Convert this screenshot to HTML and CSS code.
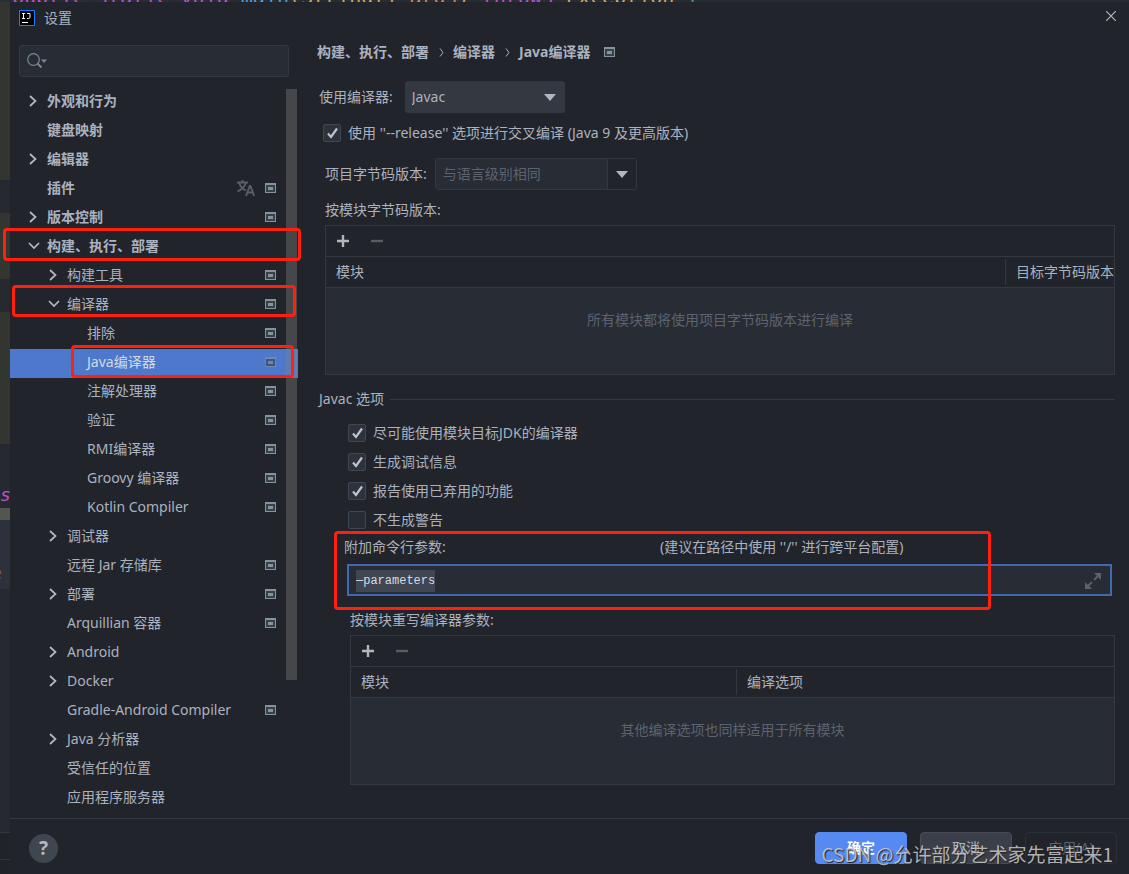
FILE: index.html
```html
<!DOCTYPE html>
<html lang="zh-CN">
<head>
<meta charset="utf-8">
<title>设置</title>
<link rel="stylesheet" href="styles.css">
</head>
<body>
<svg class="defs" aria-hidden="true">
  <symbol id="right" viewBox="0 0 16 16"><path d="M5 3l5.500 5L5 13" fill="none" stroke="currentColor" stroke-width="1.700"/></symbol>
  <symbol id="down" viewBox="0 0 16 16"><path d="M4 5l5 5 5-5" fill="none" stroke="currentColor" stroke-width="1.700"/></symbol>
  <symbol id="proj" viewBox="0 0 11 10"><path d="M0 0h11v10H0z" fill="#87939a"/><path d="M1 2h9v7H1z" fill="#35414b"/><path d="M3 4h5v3H3z" fill="#87939a"/></symbol>
  <symbol id="plus" viewBox="0 0 14 14"><path d="M7 1v12M1 7h12" stroke="#b4b6b9" stroke-width="2.400"/></symbol>
  <symbol id="minus" viewBox="0 0 14 14"><path d="M1 7h12" stroke="#5b5d60" stroke-width="2.400"/></symbol>
  <symbol id="caret" viewBox="0 0 12 7"><path d="M0 0h12L6 7z" fill="#b0b7c3"/></symbol>
</svg>
<div class="editor-line"><code><span class="kw">public static void</span> <span class="fn">main</span><span class="ty">(String[]</span> <span class="arg">args</span><span class="ty">)</span> <span class="kw">throws</span> <span class="ty">Exception</span> <span class="br">{</span></code></div>
<div class="workspace">
  <div class="gutter" aria-hidden="true">
    <div class="band changed b180"></div><div class="band plain b33"></div>
    <div class="band changed b66"></div><div class="band plain b33"></div>
    <div class="band changed b132"></div><div class="band plain b64"><i>s</i></div>
    <div class="band olive b12"></div><div class="band caretline b69"><b>e</b></div>
    <div class="band plain rest"></div><div class="band status"></div><div class="band status last"></div>
  </div>
  <div class="dialog" role="dialog" aria-labelledby="title">
    <header class="titlebar">
      <svg class="logo" viewBox="0 0 16 16"><path d="M.5.500h15v15H.5z" fill="#000" stroke="#147cff"/><path d="M3 3.500h3M4.500 3.500v5M3 8.500h3M8 3.500h3v3.500q0 1.500-1.500 1.500H8M3 12.500h6" fill="none" stroke="#fff"/></svg>
      <h1 id="title">设置</h1>
      <button class="close" aria-label="关闭"><svg viewBox="0 0 10 10"><path d="M0 0l10 10M10 0L0 10" stroke="#b5b6b8" stroke-width="1.200"/></svg></button>
    </header>
    <div class="main">
      <aside class="sidebar">
        <label class="search">
          <svg viewBox="0 0 21 16"><circle cx="6.500" cy="6.500" r="5.800" fill="none" stroke="#7c8894" stroke-width="1.200"/><path d="M10.500 10.500l4 4" stroke="#7c8894" stroke-width="1.800"/><path d="M14 6.500h6l-3 3.500z" fill="#7c8894"/></svg>
          <input type="search" aria-label="搜索设置">
        </label>
        <ul class="tree">
          <li class="l1"><button aria-label="展开"><svg><use href="#right"/></svg></button><span>外观和行为</span></li>
          <li class="l1"><span>键盘映射</span></li>
          <li class="l1"><button aria-label="展开"><svg><use href="#right"/></svg></button><span>编辑器</span></li>
          <li class="l1"><span>插件</span><svg class="lang" viewBox="0 0 18 17"><path d="M0 2.500h11M5.500 0v2.500M2 2.500q2 6 7 8M9 2.500q-2 6-8.500 9M9 16l3.800-10h.6L17.200 16M10.500 12.500h5" fill="none" stroke="#5b6067" stroke-width="1.800"/></svg><svg class="proj"><use href="#proj"/></svg></li>
          <li class="l1"><button aria-label="展开"><svg><use href="#right"/></svg></button><span>版本控制</span><svg class="proj"><use href="#proj"/></svg></li>
          <li class="l1"><button aria-label="折叠"><svg><use href="#down"/></svg></button><span>构建、执行、部署</span><div class="mark mark-build"></div></li>
          <li class="l2"><button aria-label="展开"><svg><use href="#right"/></svg></button><span>构建工具</span><svg class="proj"><use href="#proj"/></svg></li>
          <li class="l2"><button aria-label="折叠"><svg><use href="#down"/></svg></button><span>编译器</span><svg class="proj"><use href="#proj"/></svg><div class="mark mark-compiler"></div></li>
          <li class="l3"><span>排除</span><svg class="proj"><use href="#proj"/></svg></li>
          <li class="l3 selected"><span>Java编译器</span><svg class="proj"><use href="#proj"/></svg><div class="mark mark-java"></div></li>
          <li class="l3"><span>注解处理器</span><svg class="proj"><use href="#proj"/></svg></li>
          <li class="l3"><span>验证</span><svg class="proj"><use href="#proj"/></svg></li>
          <li class="l3"><span>RMI编译器</span><svg class="proj"><use href="#proj"/></svg></li>
          <li class="l3"><span>Groovy 编译器</span><svg class="proj"><use href="#proj"/></svg></li>
          <li class="l3"><span>Kotlin Compiler</span><svg class="proj"><use href="#proj"/></svg></li>
          <li class="l2"><button aria-label="展开"><svg><use href="#right"/></svg></button><span>调试器</span></li>
          <li class="l2"><span>远程 Jar 存储库</span><svg class="proj"><use href="#proj"/></svg></li>
          <li class="l2"><button aria-label="展开"><svg><use href="#right"/></svg></button><span>部署</span><svg class="proj"><use href="#proj"/></svg></li>
          <li class="l2"><span>Arquillian 容器</span><svg class="proj"><use href="#proj"/></svg></li>
          <li class="l2"><button aria-label="展开"><svg><use href="#right"/></svg></button><span>Android</span></li>
          <li class="l2"><button aria-label="展开"><svg><use href="#right"/></svg></button><span>Docker</span></li>
          <li class="l2"><span>Gradle-Android Compiler</span><svg class="proj"><use href="#proj"/></svg></li>
          <li class="l2"><button aria-label="展开"><svg><use href="#right"/></svg></button><span>Java 分析器</span></li>
          <li class="l2"><span>受信任的位置</span></li>
          <li class="l2"><span>应用程序服务器</span></li>
        </ul>
      </aside>
      <main class="content">
        <nav class="crumbs"><span>构建、执行、部署</span><svg viewBox="0 0 5 9"><path d="M1 .5l3 4-3 4" fill="none" stroke="#a9b0bc"/></svg><span>编译器</span><svg viewBox="0 0 5 9"><path d="M1 .5l3 4-3 4" fill="none" stroke="#a9b0bc"/></svg><span>Java编译器</span><svg class="proj"><use href="#proj"/></svg></nav>
        <div class="field compiler">
          <label for="compiler">使用编译器:</label>
          <div class="select"><select id="compiler"><option>Javac</option></select><svg class="caret"><use href="#caret"/></svg></div>
        </div>
        <label class="check release"><input type="checkbox" checked>使用 ''--release'' 选项进行交叉编译 (Java 9 及更高版本)</label>
        <div class="inset">
          <div class="field bytecode">
            <label for="bytecode">项目字节码版本:</label>
            <div class="combo"><input id="bytecode" type="text" placeholder="与语言级别相同"><button aria-label="选择版本"><svg class="caret"><use href="#caret"/></svg></button></div>
          </div>
          <p class="caption module-caption">按模块字节码版本:</p>
          <section class="panel">
            <div class="tools"><button aria-label="添加"><svg><use href="#plus"/></svg></button><button aria-label="移除" disabled><svg><use href="#minus"/></svg></button></div>
            <table><colgroup><col><col class="target-col"></colgroup>
              <thead><tr><th><span>模块</span></th><th><span>目标字节码版本</span></th></tr></thead>
              <tbody><tr><td colspan="2">所有模块都将使用项目字节码版本进行编译</td></tr></tbody></table>
          </section>
        </div>
        <h2 class="section-title">Javac 选项</h2>
        <div class="options">
          <div class="checks">
            <label class="check"><input type="checkbox" checked>尽可能使用模块目标JDK的编译器</label>
            <label class="check"><input type="checkbox" checked>生成调试信息</label>
            <label class="check"><input type="checkbox" checked>报告使用已弃用的功能</label>
            <label class="check"><input type="checkbox">不生成警告</label>
          </div>
          <div class="args">
            <div class="args-head"><label for="args">附加命令行参数:</label><span>(建议在路径中使用 ''/'' 进行跨平台配置)</span></div>
            <div class="args-box"><input id="args" type="text" value="—parameters" spellcheck="false"><button aria-label="展开"><svg viewBox="0 0 16 16"><path d="M9 7l4-4M7 9l-4 4" stroke="#5b6269" stroke-width="2"/><path d="M9 0h7v7zM0 9v7h7z" fill="#5b6269"/></svg></button></div>
            <div class="mark mark-args"></div>
          </div>
          <div class="override">
            <p class="caption">按模块重写编译器参数:</p>
            <section class="panel">
              <div class="tools"><button aria-label="添加"><svg><use href="#plus"/></svg></button><button aria-label="移除" disabled><svg><use href="#minus"/></svg></button></div>
              <table><colgroup><col><col class="options-col"></colgroup>
                <thead><tr><th><span>模块</span></th><th><span>编译选项</span></th></tr></thead>
                <tbody><tr><td colspan="2">其他编译选项也同样适用于所有模块</td></tr></tbody></table>
            </section>
          </div>
        </div>
      </main>
    </div>
    <footer class="footer">
      <button class="help" aria-label="帮助">?</button>
      <button class="btn primary">确定</button>
      <button class="btn">取消</button>
      <button class="btn" disabled>应用(A)</button>
      <div class="watermark">CSDN @允许部分艺术家先富起来1</div>
    </footer>
  </div>
</div>
<script src="main.js"></script>
</body>
</html>
```
FILE: main.js
```js
const args = document.getElementById("args");
args.focus();
args.select();
```
FILE: styles.css
```css
* { box-sizing: border-box; }
body {
  margin: 0;
  min-height: 100vh;
  display: flex;
  flex-direction: column;
  background: #21242b;
  color: #abb2bf;
  font: 14px/20px "Noto Sans", "Noto Sans CJK SC", sans-serif;
  overflow-x: hidden;
}
button, input, select { font: inherit; color: inherit; border: 0; padding: 0; margin: 0; background: none; outline: 0; }
h1, h2, p, ul { margin: 0; padding: 0; font-weight: 400; font-size: 14px; list-style: none; }
svg { display: block; flex: none; }
.defs { position: absolute; width: 0; height: 0; }

.editor-line { height: 2px; overflow: hidden; display: flex; align-items: flex-end; padding-left: 12px; background: #282c34; }
.editor-line code { font: 20px/10px "DejaVu Sans Mono", monospace; white-space: pre; flex: none; }
.kw { color: #c050c8; }
.fn { color: #4f9fd8; }
.ty { color: #d0a95f; }
.arg { color: #c98a5a; }
.br { color: #4fa050; }

.workspace { flex: 1; display: flex; }
.gutter { width: 10px; flex: none; display: flex; flex-direction: column; }
.band { overflow: hidden; }
.changed { background: #333630; }
.plain { background: #262930; }
.olive { background: #54564e; }
.caretline { background: #2c313c; }
.b180 { height: 178px; }
.b33 { height: 33px; }
.b66 { height: 66px; }
.b132 { height: 132px; }
.b64 { height: 64px; padding-top: 40px; }
.b12 { height: 12px; }
.b69 { height: 69px; padding-top: 42px; }
.b64 i { display: block; color: #c050c8; font: italic 18px/22px "DejaVu Sans Mono", monospace; }
.b69 b { display: block; color: #7a5540; font: 18px/22px "DejaVu Sans Mono", monospace; direction: rtl; width: 2px; overflow: hidden; }
.rest { flex: 1; }
.status { height: 27px; background: #202328; border-top: 1px solid #34373b; }
.last { height: 15px; }

.dialog { flex: 1; min-width: 0; display: flex; flex-direction: column; background: #21242b; }
.titlebar { height: 32px; display: flex; align-items: center; padding: 0 13px 0 9px; gap: 9px; }
.logo { width: 16px; height: 16px; }
.titlebar h1 { flex: 1; }
.close { padding: 0 0 4px; }
.close svg { width: 10px; height: 10px; }

.main { flex: 1; display: flex; }
.sidebar { width: 288px; flex: none; padding-top: 11px; }
.search { height: 32px; margin: 0 9px 11px; display: flex; align-items: center; gap: 6px; padding: 0 7px; border: 1px solid #333841; border-radius: 3px; background: #282c34; }
.search svg { width: 21px; height: 16px; }
.search input { flex: 1; min-width: 0; }
.tree { position: relative; }
.tree::after { content: ""; position: absolute; top: 1px; right: 1px; width: 11px; height: 591px; background: rgba(128, 128, 128, .38); }
.tree li { height: 29px; position: relative; display: flex; align-items: center; padding: 0 22px 3px 37px; }
.tree li.l1 { font-weight: 700; }
.tree li.l2 { padding-left: 57px; }
.tree li.l3 { padding-left: 77px; }
.tree li span { flex: 1; white-space: nowrap; }
.tree button { margin-left: -22px; width: 22px; }
.tree button svg { width: 16px; height: 16px; color: #b4b9c2; }
.tree .selected { background: #4d78cc; color: #d3d9e4; }
.selected .proj { opacity: .6; }
.proj { width: 11px; height: 10px; }
.lang { width: 18px; height: 17px; margin-right: 10px; }

.mark { position: absolute; z-index: 2; border: 3px solid #ff2010; border-radius: 4px; pointer-events: none; }
.mark-build { left: -7px; right: -3px; top: -5px; bottom: 1px; }
.mark-compiler { left: 2px; right: 2px; top: -6px; bottom: 3px; }
.mark-java { left: 61px; right: 4px; top: -4px; bottom: 0; }
.mark-args { left: -14px; right: 124px; top: -6px; bottom: -14px; }

.content { flex: 1; min-width: 0; padding: 8px 14px 33px 21px; }
.crumbs { display: flex; align-items: center; font-weight: 700; margin: 0 0 19px -2px; }
.crumbs svg { width: 5px; height: 9px; margin: 0 9px 0 10px; }
.crumbs .proj { width: 11px; height: 10px; margin: 0 14px; }
.field { display: flex; align-items: center; height: 32px; }
.compiler { gap: 12px; }
.select { position: relative; width: 160px; height: 32px; }
.select select { appearance: none; width: 100%; height: 100%; padding: 0 30px 0 7px; border-radius: 3px; background: #333841; }
.caret { width: 12px; height: 7px; }
.select .caret { position: absolute; right: 9px; top: 13px; pointer-events: none; }
.check { display: flex; align-items: center; gap: 7px; height: 20px; white-space: nowrap; }
.check input { appearance: none; width: 18px; height: 18px; border: 1px solid #404754; border-radius: 2px; background: #282c34; }
.check input:checked { background: #2e323b url("data:image/svg+xml,%3Csvg xmlns='http://www.w3.org/2000/svg' viewBox='0 0 15 15'%3E%3Cpath d='M3 7.500l3 3.500 6-8.500' fill='none' stroke='%23bcc3d0' stroke-width='2.200'/%3E%3C/svg%3E") center / 15px 15px no-repeat; }
.release { margin: 10px 0 15px 4px; }
.inset { margin-left: 6px; }
.bytecode { gap: 8px; }
.combo { display: flex; width: 202px; height: 32px; border: 1px solid #333841; border-radius: 3px; }
.combo input { flex: 1; min-width: 0; padding: 0 7px; background: #282c34; border-right: 1px solid #333841; }
.combo input::placeholder { color: #5c6370; opacity: 1; }
.combo button { width: 28px; display: grid; place-items: center; }
.caption { margin-bottom: 5px; }
.module-caption { margin-top: 10px; }
.panel { border: 1px solid #333841; height: 150px; display: flex; flex-direction: column; }
.tools { height: 31px; flex: none; display: flex; align-items: center; gap: 20px; padding-left: 10px; border-bottom: 1px solid #333841; }
.tools svg { width: 14px; height: 14px; }
table { flex: 1; width: 100%; table-layout: fixed; border-collapse: collapse; }
.target-col { width: 109px; }
.options-col { width: 378px; }
th { height: 30px; padding: 2px 0 1px; border-bottom: 1px solid #333841; text-align: left; font-weight: 400; overflow: hidden; white-space: nowrap; }
th span { display: block; padding: 3px 0 3px 10px; }
th + th span { border-left: 1px solid #333841; }
td { padding: 22px 0 0; vertical-align: top; text-align: center; color: #5c6370; background: #282c34; }

.section-title { margin-top: 14px; display: flex; align-items: center; gap: 6px; }
.section-title::after { content: ""; flex: 1; height: 1px; background: #333841; }
.options { margin: 14px 0 0 29px; }
.checks { display: grid; gap: 9px; }
.check:hover { color: #c0c6d0; }
.args { position: relative; margin-top: 7px; }
.args-head { display: grid; grid-template-columns: 316px 1fr; margin: 0 0 7px -4px; white-space: nowrap; }
.args-box { display: flex; align-items: center; height: 32px; margin: 0 3px 0 -1px; padding: 2px 9px 0 7px; border: 2px solid #4269b4; background: #282c34; }
.args-box input { flex: 1; min-width: 0; height: 22px; font: 12px/22px "Liberation Mono", monospace; color: #c3cad5; }
.args-box input::selection { background: #404753; color: #d5dbe4; }
.args-box svg { width: 16px; height: 16px; }
.override { margin: 14px 0 0 2px; }

.footer { position: relative; height: 56px; display: flex; align-items: center; gap: 13px; padding: 3px 12px 0 19px; border-top: 1px solid #333841; }
.help { width: 29px; height: 29px; border-radius: 50%; background: #404650; margin-right: auto; font-size: 19px; font-weight: 700; color: #b4b8bf; }
.btn { width: 92px; height: 32px; border: 1px solid #464b56; border-radius: 4px; background: #3b3f49; }
.btn.primary { background: #568af2; border-color: #568af2; color: #fff; font-weight: 700; }
.btn:disabled { background: none; border-color: #2b2f37; color: #5c6370; }
.watermark { position: absolute; right: 16px; top: 21px; font: 19px/28px "Noto Sans CJK SC", sans-serif; color: rgba(215, 215, 215, .8); text-shadow: 1px 1px 1px #222; pointer-events: none; white-space: nowrap; }
```
